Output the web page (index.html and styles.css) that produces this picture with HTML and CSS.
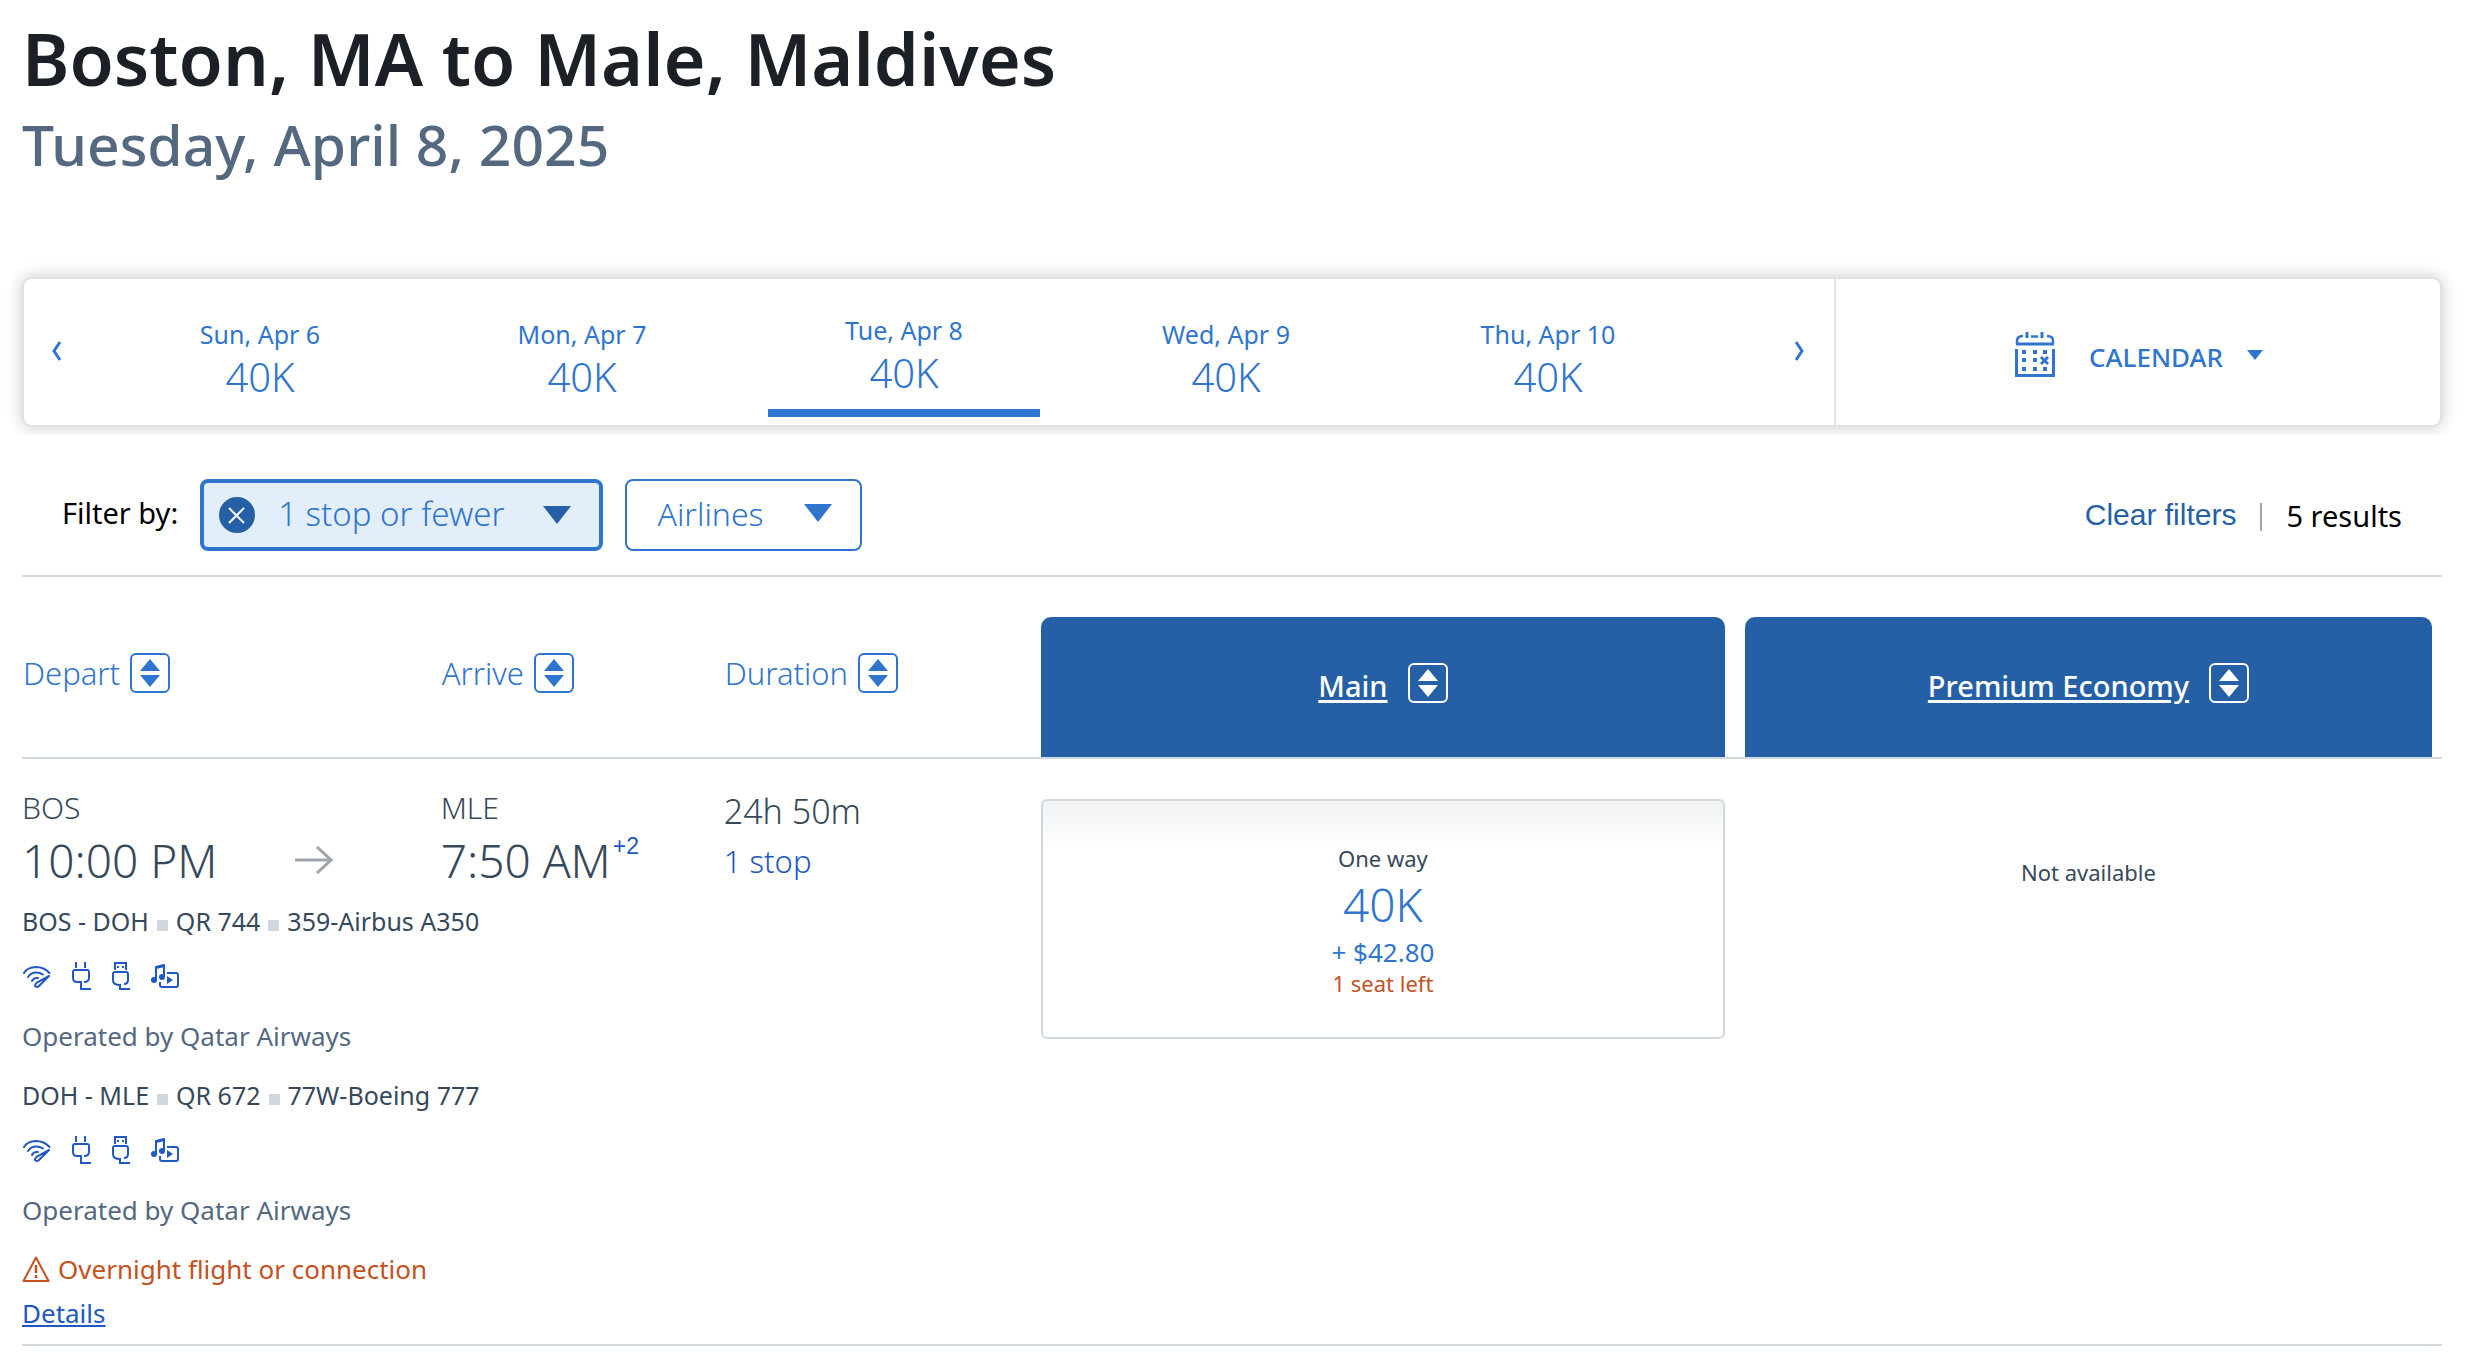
FILE: index.html
```html
<!DOCTYPE html>
<html lang="en">
<head>
<meta charset="utf-8">
<meta name="viewport" content="width=device-width, initial-scale=1">
<title>Boston, MA to Male, Maldives</title>
<link rel="stylesheet" href="styles.css">
</head>
<body>
<svg class="sprite" aria-hidden="true">
  <symbol id="sort" viewBox="0 0 40 40">
    <rect x="1" y="1" width="38" height="38" rx="5" fill="none" stroke="currentColor" stroke-width="2"/>
    <path d="M20 6l10 12H10zM20 34L10 22h20z" fill="currentColor"/>
  </symbol>
  <symbol id="down" viewBox="0 0 28 18"><path d="M0 0h28L14 18z" fill="currentColor"/></symbol>
  <symbol id="wifi" viewBox="0 0 28 28">
    <g fill="none" stroke="currentColor" stroke-width="2" stroke-linecap="round">
      <path d="M1 11Q4 5.500 13 5Q21 5 26.500 11M5 15Q8 10.500 13 10.500Q17 10.500 20 12.500M9 19Q10.500 15.500 15 16"/>
      <path d="M26 14L14 20.500Q11 23 12.500 24.500Q14.500 26 17 23L26 14"/>
    </g>
  </symbol>
  <symbol id="power" viewBox="0 0 20 28">
    <path d="M5 0v6M14 0v6M13 20q5 0 5-4V10q0-2-2-2H4q-2 0-2 2v6q0 4 4 4h4v7h10" fill="none" stroke="currentColor" stroke-width="2"/>
  </symbol>
  <symbol id="usb" viewBox="0 0 20 28">
    <path d="M4 8V1h11v7M13 22q4 0 4-4V12q0-2-2-2H4q-2 0-2 2v6q0 5 7 5v4h10" fill="none" stroke="currentColor" stroke-width="2"/>
    <path d="M6 4h2v2H6zM11 4h2v2h-2z" fill="currentColor"/>
  </symbol>
  <symbol id="media" viewBox="0 0 28 28">
    <path d="M5 18V5l8-2v12M5 6l8-2M16 11h9q2 0 2 2v10q0 2-2 2H11q-2 0-2-2v-3" fill="none" stroke="currentColor" stroke-width="2" stroke-linejoin="round"/>
    <circle cx="3" cy="18" r="3" fill="currentColor"/><circle cx="11" cy="15" r="3" fill="currentColor"/>
    <path d="M16 14l6 4-6 4z" fill="currentColor"/>
  </symbol>
</svg>

<main class="page">
  <header class="trip">
    <h1 class="trip-title">Boston, MA to Male, Maldives</h1>
    <p class="trip-date">Tuesday, April 8, 2025</p>
  </header>

  <nav class="date-bar" aria-label="Departure date">
    <button class="step step-prev" type="button" aria-label="Earlier dates"><svg width="10" height="20" viewBox="0 0 10 20"><path d="M8 1L2 10l6 9" fill="none" stroke="currentColor" stroke-width="3"/></svg></button>
    <button class="day" type="button"><span class="day-name">Sun, Apr 6</span><span class="day-price">40K</span></button>
    <button class="day" type="button"><span class="day-name">Mon, Apr 7</span><span class="day-price">40K</span></button>
    <button class="day day-active" type="button" aria-current="date"><span class="day-name">Tue, Apr 8</span><span class="day-price">40K</span></button>
    <button class="day" type="button"><span class="day-name">Wed, Apr 9</span><span class="day-price">40K</span></button>
    <button class="day" type="button"><span class="day-name">Thu, Apr 10</span><span class="day-price">40K</span></button>
    <button class="step step-next" type="button" aria-label="Later dates"><svg width="10" height="20" viewBox="0 0 10 20"><path d="M2 1l6 9-6 9" fill="none" stroke="currentColor" stroke-width="3"/></svg></button>
    <button class="calendar" type="button">
      <svg width="40" height="46" viewBox="0 0 40 46" fill="none" stroke="currentColor">
        <path d="M2 12V9q0-5 6-5M32 4q6 0 6 5v3M16 4.500h7" stroke-width="2.500"/>
        <path d="M12 0v6M27 0v6M1 12h38" stroke-width="3"/>
        <path d="M1.500 17v27M38.500 17v27" stroke-width="3"/><path d="M0 43.500h40" stroke-width="3"/>
        <path d="M7 20h4M18 20h4M28 20h4M7 28h4M18 28h4M7 37h4M18 37h4M28 37h4" stroke-width="4"/>
        <path d="M26 25l7 7M33 25l-7 7" stroke-width="3"/>
      </svg>
      <span class="calendar-text">CALENDAR</span>
      <svg class="calendar-arrow" width="16" height="10" viewBox="0 0 28 18" preserveAspectRatio="none"><path d="M0 0h28L14 18z" fill="currentColor"/></svg>
    </button>
  </nav>

  <section class="filters" aria-label="Filters">
    <span class="filters-label">Filter by:</span>
    <button class="filter filter-on" type="button">
      <svg width="36" height="36" viewBox="0 0 36 36"><circle cx="18" cy="18" r="18" fill="#255fa6"/><path d="M10 11l15 15M25 11L10 26" stroke="#fff" stroke-width="2"/></svg>
      <span class="filter-on-text">1 stop or fewer</span>
      <svg class="filter-on-arrow" width="28" height="18"><use href="#down"/></svg>
    </button>
    <button class="filter" type="button"><span>Airlines</span><svg width="28" height="18"><use href="#down"/></svg></button>
    <div class="summary">
      <a class="clear" href="#">Clear filters</a>
      <span class="summary-rule"></span>
      <span>5 results</span>
    </div>
  </section>

  <table class="results">
    <colgroup><col class="col-depart"><col class="col-arrive"><col class="col-duration"><col class="col-main"><col class="col-premium"></colgroup>
    <thead>
      <tr>
        <th scope="col"><button class="sort" type="button">Depart<svg width="40" height="40"><use href="#sort"/></svg></button></th>
        <th scope="col"><button class="sort" type="button">Arrive<svg width="40" height="40"><use href="#sort"/></svg></button></th>
        <th scope="col"><button class="sort" type="button">Duration<svg width="40" height="40"><use href="#sort"/></svg></button></th>
        <th scope="col" class="fare-col"><div class="cabin"><a class="cabin-link" href="#">Main</a><button class="cabin-sort" type="button" aria-label="Sort by Main"><svg width="40" height="40"><use href="#sort"/></svg></button></div></th>
        <th scope="col" class="fare-last"><div class="cabin"><a class="cabin-link" href="#">Premium Economy</a><button class="cabin-sort" type="button" aria-label="Sort by Premium Economy"><svg width="40" height="40"><use href="#sort"/></svg></button></div></th>
      </tr>
    </thead>
    <tbody>
      <tr>
        <td class="leg">
          <div class="airport">BOS</div>
          <div class="time time-depart">10:00 PM<svg class="arrow" width="38" height="28" viewBox="0 0 38 28"><path d="M0 14h36M22 1l14 13-14 13" fill="none" stroke="#9da6ab" stroke-width="3"/></svg></div>
        </td>
        <td class="leg">
          <div class="airport">MLE</div>
          <div class="time">7:50 AM<span class="plus-days">+2</span></div>
        </td>
        <td class="leg">
          <div class="duration">24h 50m</div>
          <a class="stops" href="#">1 stop</a>
        </td>
        <td class="fare-col fare-cell" rowspan="2">
          <button class="fare" type="button">
            <span class="fare-note">One way</span>
            <span class="fare-points">40K</span>
            <span class="fare-tax">+ $42.80</span>
            <span class="fare-left">1 seat left</span>
          </button>
        </td>
        <td class="fare-last fare-cell" rowspan="2"><div class="fare-none">Not available</div></td>
      </tr>
      <tr>
        <td class="details" colspan="3">
          <div class="segment"><span>BOS - DOH</span><i class="dot"></i><span>QR 744</span><i class="dot"></i><span>359-Airbus A350</span></div>
          <div class="amenities"><svg width="28" height="28"><use href="#wifi"/></svg><svg width="20" height="28"><use href="#power"/></svg><svg width="20" height="28"><use href="#usb"/></svg><svg width="28" height="28"><use href="#media"/></svg></div>
          <div class="operator">Operated by Qatar Airways</div>
          <div class="segment"><span>DOH - MLE</span><i class="dot"></i><span>QR 672</span><i class="dot"></i><span>77W-Boeing 777</span></div>
          <div class="amenities"><svg width="28" height="28"><use href="#wifi"/></svg><svg width="20" height="28"><use href="#power"/></svg><svg width="20" height="28"><use href="#usb"/></svg><svg width="28" height="28"><use href="#media"/></svg></div>
          <div class="operator">Operated by Qatar Airways</div>
          <div class="warning"><svg width="28" height="26" viewBox="0 0 28 26"><path d="M14 1.500L26.500 25h-25z" fill="none" stroke="currentColor" stroke-width="2" stroke-linejoin="round"/><path d="M14 9v8M14 19v3" stroke="currentColor" stroke-width="2.500"/></svg><span>Overnight flight or connection</span></div>
          <a class="more" href="#">Details</a>
        </td>
      </tr>
    </tbody>
  </table>
</main>
</body>
</html>
```
FILE: styles.css
```css
* { box-sizing: border-box; }
body {
  margin: 0;
  background: #fff;
  color: #36495a;
  font-family: "Noto Sans", "Open Sans", sans-serif;
  font-weight: 300;
}
button {
  margin: 0;
  padding: 0;
  border: 0;
  background: none;
  color: #3075cd;
  font: inherit;
  cursor: pointer;
}
svg { display: block; flex: none; }
.sprite { position: absolute; width: 0; height: 0; }
.page { padding: 14px 24px 10px 22px; }

.trip-title { margin: 0; color: #1a2026; font-size: 72px; font-weight: 600; line-height: 88px; }
.trip-date { margin: 6px 0 0; color: #54687f; font-size: 57px; font-weight: 500; line-height: 72px; }

.date-bar {
  display: grid;
  grid-template-columns: 75fr repeat(5, 322fr) 125fr 606fr;
  height: 150px;
  margin-top: 97px;
  border: 2px solid #e2e2e2;
  border-radius: 10px;
  background: #fff;
  box-shadow: 0 0 16px rgba(0, 0, 0, .22);
}
.step { display: flex; padding-top: 62px; }
.step-prev { padding-left: 28px; }
.step-next { justify-content: flex-end; padding-right: 30px; }
.day { display: flex; flex-direction: column; align-items: center; padding-top: 37px; }
.day-name { font-size: 25px; font-weight: 400; line-height: 37px; }
.day-price { font-size: 40px; line-height: 48px; }
.day-active { margin: 0 25px 8px; padding-top: 33px; border-bottom: 8px solid #3075cd; }
.calendar {
  display: flex;
  align-items: center;
  justify-content: center;
  gap: 34px;
  padding: 6px 0 0 2px;
  border-left: 2px solid #e2e2e2;
  font-size: 26px;
  font-weight: 500;
}
.calendar-text { padding-top: 4px; }
.calendar-arrow { margin-left: -10px; }

.filters {
  position: relative;
  display: flex;
  align-items: center;
  margin-top: 8px;
  padding: 44px 40px 24px;
  border-bottom: 2px solid #d1d8dd;
  background: #fff;
  color: #000;
  font-size: 29px;
}
.filters-label { margin-right: 22px; padding-bottom: 6px; font-weight: 400; }
.filter {
  display: flex;
  align-items: center;
  gap: 40px;
  height: 72px;
  padding: 0 28px 4px 30px;
  border: 2px solid #3075cd;
  border-radius: 8px;
  font-size: 32px;
}
.filter-on { gap: 23px; margin-right: 22px; padding: 0 28px 0 15px; border-width: 4px; background: #e2eefa; font-size: 33px; }
.filter-on-text { padding-bottom: 4px; }
.filter-on-arrow { margin-left: 16px; color: #255fa6; }
.summary { display: flex; align-items: center; gap: 24px; margin-left: auto; font-size: 29px; font-weight: 400; }
.summary-rule { width: 2px; height: 28px; margin-top: 4px; background: #9da6ab; }
.clear { color: #255fa6; font-family: "Liberation Sans", Arial, sans-serif; font-size: 30px; text-decoration: none; }

.results { width: 100%; margin-top: 40px; border-spacing: 0; table-layout: fixed; }
.results th, .results td { padding: 0; text-align: left; vertical-align: top; font-weight: inherit; }
.results th { border-bottom: 2px solid #d1d8dd; }
.col-depart { width: 17.3%; }
.col-arrive { width: 11.7%; }
.col-duration { width: 13.1%; }
.col-main { width: 29.1%; }
.results .fare-col { padding-right: 20px; }
.results .fare-last { padding-right: 10px; }
.sort { display: flex; align-items: center; gap: 10px; padding: 36px 0 0 1px; font-size: 31px; line-height: 40px; }
.cabin {
  display: flex;
  align-items: center;
  justify-content: center;
  gap: 20px;
  height: 140px;
  padding-bottom: 8px;
  border-radius: 10px 10px 0 0;
  background: #255fa6;
}
.cabin-link { padding-top: 4px; color: #fff; font-size: 29px; font-weight: 550; text-decoration-thickness: 3px; text-underline-offset: 3px; }
.cabin-sort { color: #fff; }

.results .leg { padding-top: 27px; }
.airport { font-size: 30px; line-height: 44px; }
.time { display: flex; height: 60px; font-size: 46px; line-height: 60px; }
.time-depart { align-items: center; justify-content: space-between; padding-right: 108px; }
.plus-days { margin-left: 2px; color: #2058c4; font: 23px/32px "Liberation Sans", Arial, sans-serif; }
.duration { font-size: 34px; line-height: 50px; }
.stops { display: block; color: #2058c4; font-size: 31px; line-height: 50px; text-decoration: none; }

.results .details { padding: 13px 0; font-weight: 400; }
.results .details, .results .fare-cell { border-bottom: 2px solid #d1d8dd; }
.segment { display: flex; align-items: center; gap: 8px; font-size: 25px; line-height: 36px; }
.dot { width: 11px; height: 11px; margin-top: 8px; background: #d1d8dd; }
.amenities { display: flex; gap: 20px; margin: 23px 0 28px; color: #2058c4; padding-left: 1px; }
.operator { margin-bottom: 23px; color: #54687f; font-size: 26px; line-height: 36px; }
.warning { display: flex; align-items: center; gap: 8px; color: #c4511e; font-size: 26px; line-height: 36px; }
.more { display: block; width: max-content; margin-top: 8px; color: #2058c4; font-size: 26px; line-height: 36px; }

.results .fare-cell { padding-top: 40px; text-align: center; }
.fare {
  display: flex;
  flex-direction: column;
  align-items: center;
  width: 100%;
  height: 240px;
  padding-top: 39px;
  border: 2px solid #d1d8dd;
  border-radius: 6px;
  background: linear-gradient(#f0f2f4, #fff 48px);
}
.fare-note { color: #36495a; font-size: 22px; font-weight: 400; line-height: 36px; }
.fare-points { font-size: 46px; line-height: 56px; }
.fare-tax { font-size: 26px; font-weight: 400; line-height: 40px; }
.fare-left { color: #c4511e; font-size: 22px; font-weight: 400; line-height: 22px; }
.fare-none { padding-top: 55px; font-size: 22px; font-weight: 400; line-height: 36px; }
```
